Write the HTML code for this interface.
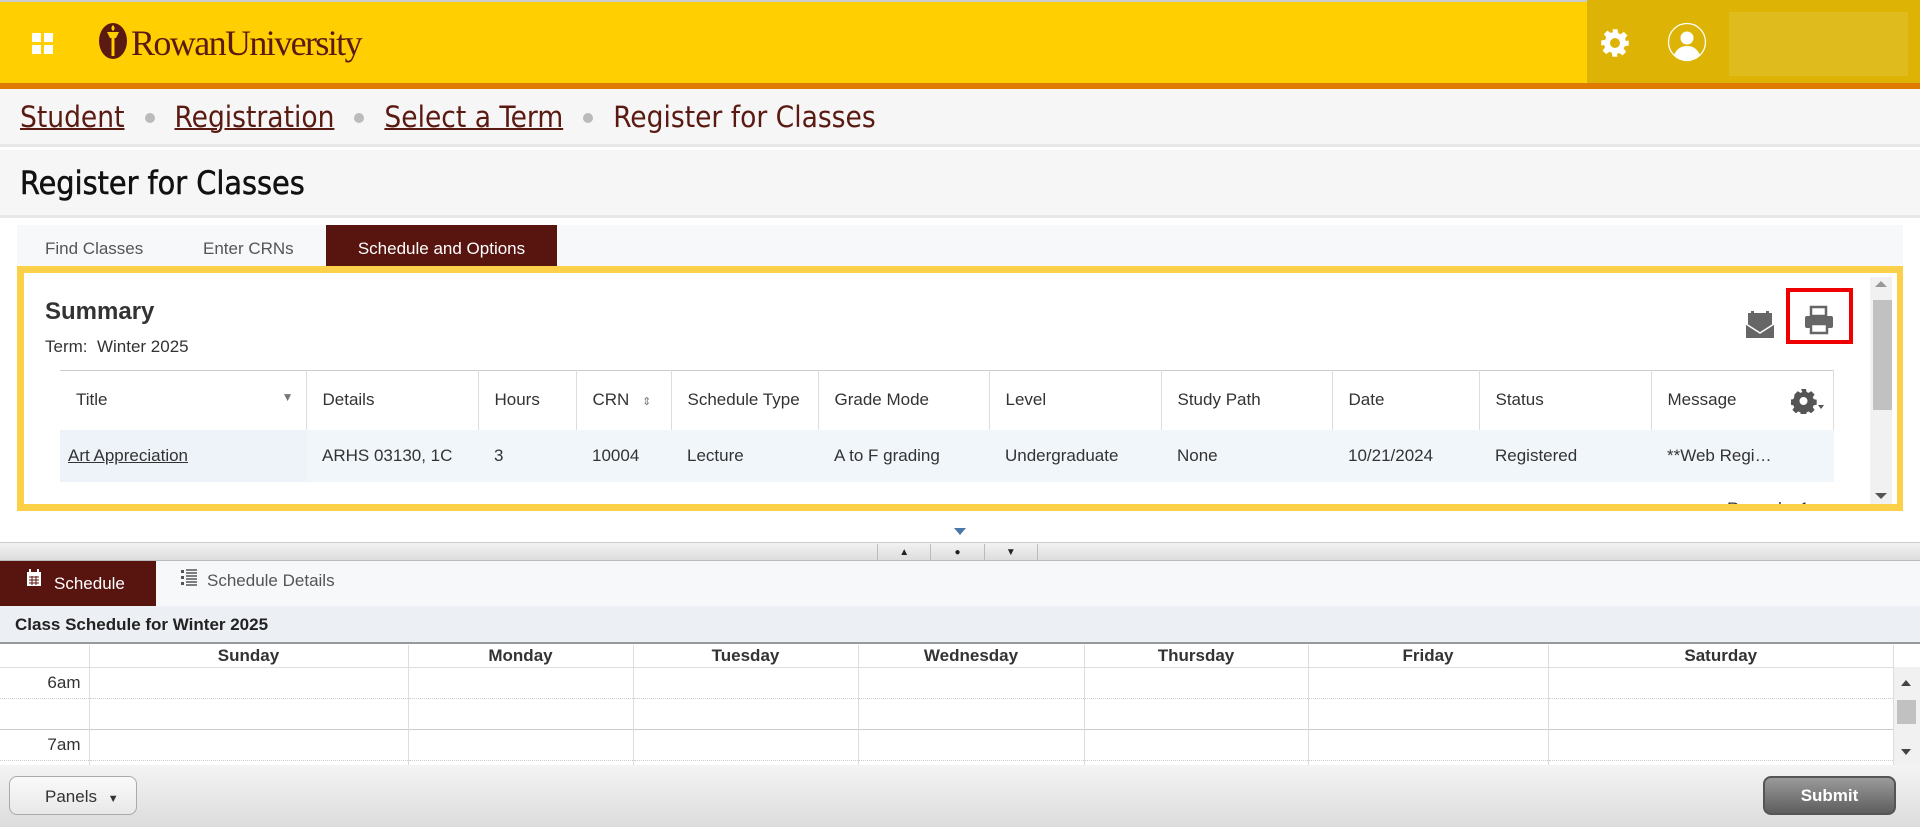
<!DOCTYPE html>
<html><head><meta charset="utf-8"><style>
*{box-sizing:border-box;margin:0;padding:0}
body{width:1920px;height:827px;overflow:hidden;background:#fff;font-family:"Liberation Sans",Arial,sans-serif;position:relative;color:#333}
.abs{position:absolute}
.hdr{left:0;top:0;width:1920px;height:83px;background:#ffcf01;border-top:2px solid #ccc}
.hdr2{left:1587px;top:0;width:333px;height:83px;background:#ddb405}
.orange{left:0;top:83px;width:1920px;height:6px;background:#de7b00}
.bc{left:0;top:89px;width:1920px;height:58px;background:#f6f6f6;border-bottom:3px solid #e8e8e8;font-family:"DejaVu Sans Condensed","Liberation Sans Narrow","Liberation Sans",sans-serif;font-size:29.5px;color:#5a1a12;padding:11px 0 0 20px}
.bc a{color:#5a1a12;text-decoration:underline;text-decoration-thickness:2px}
.bc .dot{display:inline-block;width:10px;height:10px;border-radius:50%;background:#bbb;margin:0 20px 4px 20px}
.ttl{left:0;top:150px;width:1920px;height:68px;background:#f6f6f6;border-bottom:3px solid #e8e8e8;font-family:"DejaVu Sans Condensed","Liberation Sans",sans-serif;font-size:32px;color:#111;padding:14px 0 0 20px;-webkit-text-stroke:0.5px #111}
.tabs{left:17px;top:225px;width:1886px;height:41px;background:#f6f8fa;font-size:17px;color:#555}
.tab{position:absolute;top:0;height:41px;line-height:47px}
.panel{left:17px;top:266px;width:1886px;height:245px;border:7px solid #fdd04a;border-right-width:6px;background:#fff;overflow:hidden}
th,td{font-weight:normal;text-align:left;font-size:17px;color:#333}
.cal td{border-right:1px solid #ddd}
</style></head><body>
<div class="abs hdr"></div><div class="abs hdr2"></div>
<div class="abs" style="left:1729px;top:12px;width:179px;height:64px;background:#dfbb1e"></div>
<div class="abs orange"></div>
<div class="abs" style="left:32px;top:33px;width:9px;height:9px;background:#fff"></div>
<div class="abs" style="left:44px;top:33px;width:9px;height:9px;background:#fff"></div>
<div class="abs" style="left:32px;top:45px;width:9px;height:9px;background:#fff"></div>
<div class="abs" style="left:44px;top:45px;width:9px;height:9px;background:#fff"></div>
<svg class="abs" style="left:98px;top:22px" width="30" height="38" viewBox="0 0 30 38"><ellipse cx="15" cy="19" rx="14" ry="18" fill="#5a1a12"/><path d="M9 10h12l-3 6h-6z" fill="#ffcf01"/><rect x="13.5" y="16" width="3" height="18" fill="#ffcf01"/><path d="M15 3c3 3 1 5 0 6c-1-1-3-3 0-6z" fill="#ffcf01"/></svg>
<div class="abs" style="left:131px;top:22px;font-family:'Liberation Serif',serif;font-size:36px;color:#5a1a12;letter-spacing:-1.6px">RowanUniversity</div>
<svg class="abs" style="left:1600px;top:28px" width="30" height="30" viewBox="0 0 24 24"><path fill="#fff" d="M10 1h4l.6 3.2 1.8.8 2.7-1.9 2.8 2.8-1.9 2.7.8 1.8L23 10v4l-3.2.6-.8 1.8 1.9 2.7-2.8 2.8-2.7-1.9-1.8.8L14 23h-4l-.6-3.2-1.8-.8-2.7 1.9-2.8-2.8 1.9-2.7-.8-1.8L1 14v-4l3.2-.6.8-1.8-1.9-2.7 2.8-2.8 2.7 1.9 1.8-.8zM12 8a4 4 0 100 8 4 4 0 000-8z"/></svg>
<svg class="abs" style="left:1667px;top:22px" width="40" height="40" viewBox="0 0 40 40"><circle cx="20" cy="20" r="18.5" fill="none" stroke="#fff" stroke-width="1.3"/><circle cx="20" cy="16" r="6.5" fill="#fff"/><path d="M7 33c3-7 8-9 13-9s10 2 13 9c-4 4-9 5.5-13 5.5S11 37 7 33z" fill="#fff"/></svg>
<div class="abs bc"><a>Student</a><span class="dot"></span><a>Registration</a><span class="dot"></span><a>Select a Term</a><span class="dot"></span><span>Register for Classes</span></div>
<div class="abs ttl">Register for Classes</div>
<div class="abs tabs"><span class="tab" style="left:28px">Find Classes</span><span class="tab" style="left:186px">Enter CRNs</span><span class="tab" style="left:309px;width:231px;background:#58140e;color:#fff;text-align:center">Schedule and Options</span></div>
<div class="abs panel">
 <div class="abs" style="left:21px;top:25px;font-size:24px;font-weight:bold;color:#333">Summary</div>
 <div class="abs" style="left:21px;top:64px;font-size:17px">Term:&nbsp; Winter 2025</div>
 <svg class="abs" style="left:1721px;top:37px" width="30" height="30" viewBox="0 0 30 30"><rect x="3" y="3" width="24" height="14" fill="#666"/><rect x="6" y="1" width="3" height="4" fill="#666"/><rect x="21" y="1" width="3" height="4" fill="#666"/><path d="M1 14h28v14H1z" fill="#666"/><path d="M1 14l14 9 14-9" fill="none" stroke="#fff" stroke-width="1.5"/></svg>
 <div class="abs" style="left:1762px;top:15px;width:67px;height:56px;border:4px solid #e00"></div>
 <svg class="abs" style="left:1780px;top:32px" width="30" height="30" viewBox="0 0 30 30"><rect x="7" y="2" width="15" height="9" fill="#fff" stroke="#666" stroke-width="2.5"/><rect x="1" y="11" width="28" height="12" rx="2" fill="#666"/><rect x="7" y="19" width="16" height="9" fill="#fff" stroke="#666" stroke-width="2.5"/></svg>
 <div class="abs" style="left:1846px;top:4px;width:22px;height:232px;background:#f1f1f1"></div>
 <div class="abs" style="left:1849px;top:27px;width:19px;height:110px;background:#c1c1c1"></div>
 <div class="abs" style="left:1851px;top:8px;width:0;border:6px solid transparent;border-bottom-color:#999;border-top:0"></div>
 <div class="abs" style="left:1851px;top:220px;width:0;border:6px solid transparent;border-top-color:#555;border-bottom:0"></div>
 <div class="abs" style="left:1703px;top:226px;font-size:17px">Records: 1</div>
 <table class="abs" style="left:36px;top:97px;width:1774px;border-collapse:collapse">
  <tr style="height:59px;border-top:1px solid #ccc">
   <th style="width:246px;padding-left:16px;border-right:1px solid #ddd">Title <span style="float:right;margin-right:12px;font-size:12px;color:#777">▼</span></th>
   <th style="width:172px;padding-left:16px;border-right:1px solid #ddd">Details</th>
   <th style="width:98px;padding-left:16px;border-right:1px solid #ddd">Hours</th>
   <th style="width:95px;padding-left:16px;border-right:1px solid #ddd">CRN <span style="font-size:11px;color:#777;margin-left:8px">⇕</span></th>
   <th style="width:147px;padding-left:16px;border-right:1px solid #ddd">Schedule Type</th>
   <th style="width:171px;padding-left:16px;border-right:1px solid #ddd">Grade Mode</th>
   <th style="width:172px;padding-left:16px;border-right:1px solid #ddd">Level</th>
   <th style="width:171px;padding-left:16px;border-right:1px solid #ddd">Study Path</th>
   <th style="width:147px;padding-left:16px;border-right:1px solid #ddd">Date</th>
   <th style="width:172px;padding-left:16px;border-right:1px solid #ddd">Status</th>
   <th style="padding-left:16px;border-right:1px solid #ddd;position:relative">Message <svg style="position:absolute;right:8px;top:17px" width="34" height="26" viewBox="0 0 34 26"><path fill="#555" d="M10 1h5l.6 3 2 .9 2.6-1.8 3.4 3.4-1.8 2.6.9 2 3 .6v5l-3 .6-.9 2 1.8 2.6-3.4 3.4-2.6-1.8-2 .9-.6 3h-5l-.6-3-2-.9-2.6 1.8-3.4-3.4 1.8-2.6-.9-2-3-.6v-5l3-.6.9-2L3.4 6.5 6.8 3.1l2.6 1.8 2-.9zM12.5 9a4 4 0 100 8 4 4 0 000-8z"/><path fill="#555" d="M27 17h6l-3 4z"/></svg></th>
  </tr>
  <tr style="height:52px;background:#f1f6fb">
   <td style="padding-left:8px;background:#edf3f9"><u>Art Appreciation</u></td><td style="padding-left:16px">ARHS 03130, 1C</td><td style="padding-left:16px">3</td><td style="padding-left:16px">10004</td><td style="padding-left:16px">Lecture</td><td style="padding-left:16px">A to F grading</td><td style="padding-left:16px">Undergraduate</td><td style="padding-left:16px">None</td><td style="padding-left:16px">10/21/2024</td><td style="padding-left:16px">Registered</td><td style="padding-left:16px">**Web Regi…</td>
  </tr>
 </table>
</div>
<div class="abs" style="left:954px;top:528px;border:6px solid transparent;border-top:7px solid #4a78a8;border-bottom:0"></div>
<div class="abs" style="left:0;top:542px;width:1920px;height:19px;background:linear-gradient(#f2f2f2,#ddd);border-top:1px solid #ccc;border-bottom:1px solid #bbb"></div>
<div class="abs" style="left:877px;top:544px;width:161px;height:17px;display:flex;font-size:10px;color:#222">
 <div style="flex:1;border-left:1px solid #bbb;text-align:center;line-height:17px">▲</div><div style="flex:1;border-left:1px solid #bbb;border-right:1px solid #bbb;text-align:center;line-height:17px">●</div><div style="flex:1;border-right:1px solid #bbb;text-align:center;line-height:17px">▼</div></div>
<div class="abs" style="left:0;top:561px;width:1920px;height:45px;background:#f6f8fa"></div>
<div class="abs" style="left:0;top:561px;width:156px;height:45px;background:#58140e;color:#fff;font-size:17px;padding:13px 0 0 54px">Schedule
 <svg style="position:absolute;left:26px;top:8px" width="16" height="18" viewBox="0 0 16 18"><rect x="1" y="3" width="14" height="14" fill="#fff"/><rect x="3" y="0" width="2" height="4" fill="#fff"/><rect x="11" y="0" width="2" height="4" fill="#fff"/><path d="M3 8h10M3 11h10M3 14h10M6 7v9M10 7v9" stroke="#58140e" stroke-width="1"/></svg></div>
<div class="abs" style="left:181px;top:569px;font-size:17px;color:#555"><svg style="vertical-align:-1px;margin-right:10px" width="16" height="18" viewBox="0 0 16 18"><path d="M0 1h3v3H0zM0 7h3v3H0zM0 13h3v3H0z" fill="#555"/><path d="M5 1h11M5 4h11M5 7h11M5 10h11M5 13h11M5 16h11" stroke="#555" stroke-width="1.4"/></svg>Schedule Details</div>
<div class="abs" style="left:0;top:606px;width:1920px;height:38px;background:#eceff3;border-bottom:2px solid #999;font-size:17px;font-weight:bold;color:#222;padding:9px 0 0 15px">Class Schedule for Winter 2025</div>
<table class="abs cal" style="left:0;top:645px;width:1894px;border-collapse:collapse;font-size:17px">
 <tr style="height:22px;border-bottom:1px solid #ddd"><td style="width:89px"></td><td style="width:319px;text-align:center;font-weight:bold">Sunday</td><td style="width:225px;text-align:center;font-weight:bold">Monday</td><td style="width:225px;text-align:center;font-weight:bold">Tuesday</td><td style="width:226px;text-align:center;font-weight:bold">Wednesday</td><td style="width:224px;text-align:center;font-weight:bold">Thursday</td><td style="width:240px;text-align:center;font-weight:bold">Friday</td><td style="text-align:center;font-weight:bold">Saturday</td></tr>
 <tr style="height:31px;border-bottom:1px dotted #ccc"><td style="text-align:right;padding-right:8px">6am</td><td></td><td></td><td></td><td></td><td></td><td></td><td></td></tr>
 <tr style="height:31px;border-bottom:1px solid #ccc"><td></td><td></td><td></td><td></td><td></td><td></td><td></td><td></td></tr>
 <tr style="height:31px;border-bottom:1px dotted #ccc"><td style="text-align:right;padding-right:8px">7am</td><td></td><td></td><td></td><td></td><td></td><td></td><td></td></tr>
 <tr style="height:6px"><td></td><td></td><td></td><td></td><td></td><td></td><td></td><td></td></tr>
</table>
<div class="abs" style="left:1894px;top:667px;width:26px;height:98px;background:#f1f1f1"></div>
<div class="abs" style="left:1897px;top:700px;width:19px;height:24px;background:#c1c1c1"></div>
<div class="abs" style="left:1901px;top:680px;border:5px solid transparent;border-bottom:6px solid #444;border-top:0"></div>
<div class="abs" style="left:1901px;top:749px;border:5px solid transparent;border-top:6px solid #444;border-bottom:0"></div>
<div class="abs" style="left:0;top:765px;width:1920px;height:62px;background:linear-gradient(#f4f4f4,#dcdcdc)"></div>
<div class="abs" style="left:9px;top:776px;width:128px;height:39px;border:1px solid #aaa;border-radius:8px;background:linear-gradient(#fafafa,#e8e8e8);font-size:17px;color:#333;padding:10px 0 0 35px">Panels <span style="font-size:11px;margin-left:6px">▼</span></div>
<div class="abs" style="left:1763px;top:776px;width:133px;height:39px;border:2px solid #555;border-radius:8px;background:linear-gradient(#9a9a9a,#5e5e5e);font-size:17px;font-weight:bold;color:#fff;text-align:center;line-height:35px">Submit</div>
</body></html>
